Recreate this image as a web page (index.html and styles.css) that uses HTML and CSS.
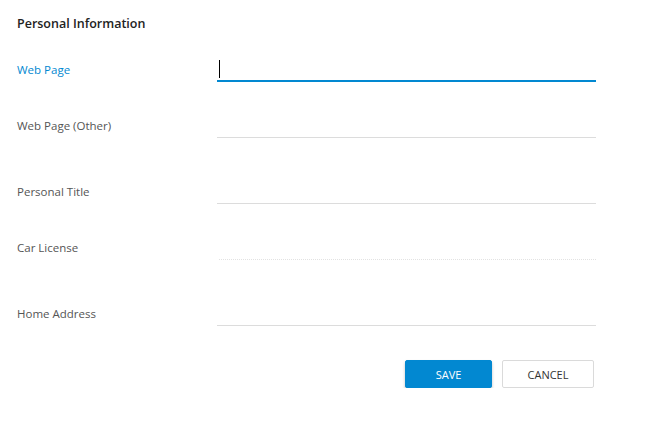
FILE: index.html
```html
<!DOCTYPE html>
<html lang="en">
<head>
<meta charset="UTF-8">
<title>Personal Information</title>
<link rel="stylesheet" href="styles.css">
</head>
<body>
<form class="form">
  <h3 class="title">Personal Information</h3>
  <div class="row">
    <label class="label active">Web Page</label>
    <div class="field">
      <input type="text" class="input focused">
      <span class="caret"></span>
    </div>
  </div>
  <div class="row">
    <label class="label">Web Page (Other)</label>
    <div class="field"><input type="text" class="input"></div>
  </div>
  <div class="row tall">
    <label class="label">Personal Title</label>
    <div class="field"><input type="text" class="input"></div>
  </div>
  <div class="row">
    <label class="label">Car License</label>
    <div class="field"><input type="text" class="input disabled" disabled></div>
  </div>
  <div class="row tall">
    <label class="label">Home Address</label>
    <div class="field"><input type="text" class="input"></div>
  </div>
  <div class="actions">
    <button type="button" class="btn primary">SAVE</button>
    <button type="button" class="btn">CANCEL</button>
  </div>
</form>
</body>
</html>
```

FILE: styles.css
```css
body {
  margin: 0;
  padding: 16px 0 0 17px;
  background: #fff;
  font-family: "Open Sans", Arial, sans-serif;
  color: #555;
}
.form {
  width: 579px;
}
.title {
  margin: 0;
  font-size: 12.5px;
  line-height: 16px;
  font-weight: 600;
  color: #222;
}
.row {
  display: flex;
  align-items: center;
  margin-top: 32px;
}
.row:first-of-type {
  margin-top: 26px;
}
.row.tall {
  margin-top: 42px;
}
.label {
  width: 200px;
  font-size: 11.5px;
  line-height: 16px;
  color: #555;
}
.label.active {
  color: #0288d1;
}
.field {
  position: relative;
  width: 379px;
}
.input {
  display: block;
  box-sizing: border-box;
  width: 100%;
  height: 24px;
  padding: 0 2px;
  border: none;
  border-bottom: 1px solid #dcdcdc;
  background: transparent;
  font: inherit;
  outline: none;
}
.input.focused {
  border-bottom: 2px solid #0288d1;
}
.input.disabled {
  border-bottom: 1px dotted #e2e2e2;
  margin-left: 2px;
  width: calc(100% - 2px);
}
.caret {
  position: absolute;
  left: 2px;
  top: 2px;
  width: 1px;
  height: 18px;
  background: #000;
}
.actions {
  display: flex;
  justify-content: flex-end;
  gap: 10px;
  margin-top: 34px;
  padding-right: 2px;
}
.btn {
  box-sizing: border-box;
  height: 28px;
  width: 92px;
  border: 1px solid #dadada;
  border-radius: 2px;
  background: #fff;
  color: #333;
  font-family: "Open Sans", Arial, sans-serif;
  font-size: 11px;
  cursor: pointer;
}
.btn.primary {
  width: 87px;
  border-color: #0288d1;
  background: #0288d1;
  color: #fff;
  box-shadow: 0 2px 3px rgba(0,0,0,.25);
}
```
